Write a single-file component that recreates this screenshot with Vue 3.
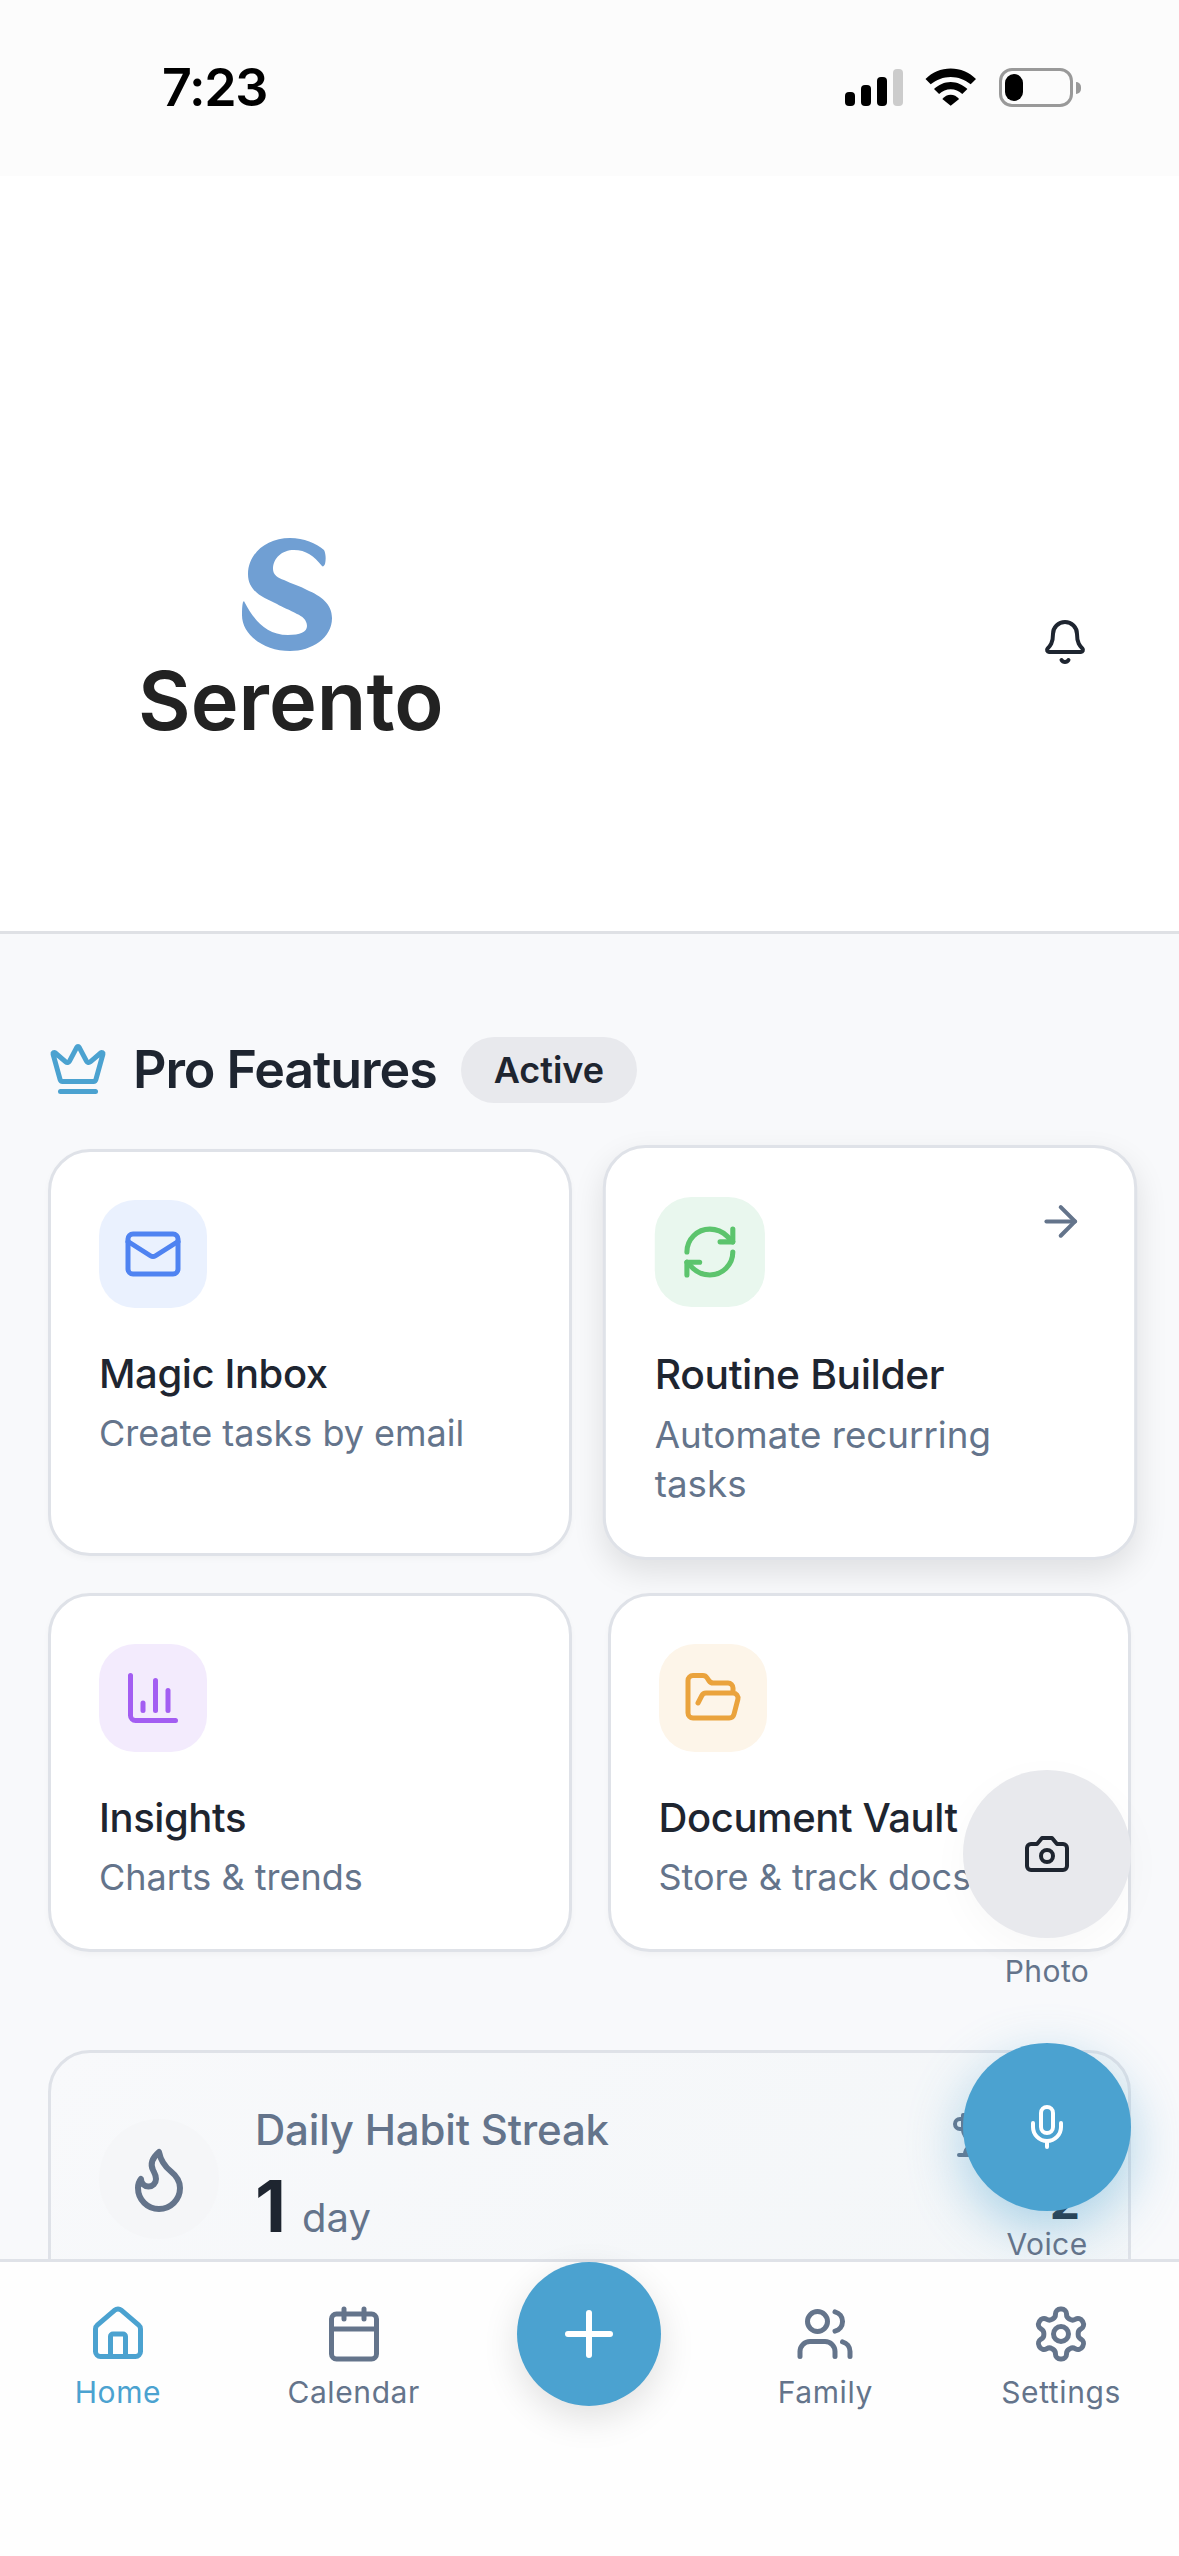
<template>
  <div class="phone">
    <div class="status-bar">
      <span class="time">7:23</span>
      <div class="status-icons">
        <div class="signal">
          <span v-for="b in signalBars" :key="b.h" class="bar" :class="{ off: b.off }" :style="{ height: b.h + 'px' }"></span>
        </div>
        <svg class="wifi" viewBox="0 0 52 38">
          <path d="M0.500 11C7 4.500 16 0.500 25.700 0.500S44.500 4.500 51 11l-5.300 5.200C40 11.800 33 9 25.700 9S11.500 11.800 5.700 16.200z" fill="#000" />
          <path d="M9 21C13.500 16.800 19.500 14 25.700 14s12.200 2.800 16.700 7l-5.100 5C34 23 30 21.300 25.700 21.300S17.500 23 14.100 26z" fill="#000" />
          <path d="M17.300 31c2.300-2.800 5.300-4.300 8.400-4.300s6.100 1.500 8.400 4.300L25.700 37.800z" fill="#000" />
        </svg>
        <div class="battery">
          <div class="battery-body"><span class="battery-fill"></span></div>
          <span class="battery-tip"></span>
        </div>
      </div>
    </div>

    <header class="app-header">
      <div class="logo">
        <svg class="logo-mark" viewBox="0 0 90 113">
          <path d="M82 12C84 16 84 22 83 26C82 28 81 29 80 28C72 18 64 12 52 12C40 12 31 20 31 31C31 37 36 40 42 42C50 46 58 48 65 52C79 58 90 66 90 80C90 100 70 113 48 113C22 113 0 97 0 77C0 72 0 68 1 64C2 63 2 63 3 65C10 78 22 97 46 97C58 97 65 94 65 88C65 82 60 78 55 76C48 72 40 69 35 66C22 60 6 54 6 36C6 16 24 0 48 0C62 0 74 5 82 12z" fill="#709fd3" />
        </svg>
        <span class="logo-name">Serento</span>
      </div>
      <svg class="lucide bell" viewBox="0 0 24 24">
        <path d="M10.268 21a2 2 0 0 0 3.464 0" />
        <path d="M3.262 15.326A1 1 0 0 0 4 17h16a1 1 0 0 0 .74-1.673C19.41 13.956 18 12.499 18 8A6 6 0 0 0 6 8c0 4.499-1.411 5.956-2.738 7.326" />
      </svg>
    </header>

    <main class="content">
      <div class="section-head">
        <svg class="lucide crown" viewBox="0 0 24 24">
          <path d="M11.562 3.266a.5.5 0 0 1 .876 0L15.39 8.87a1 1 0 0 0 1.516.294L21.183 5.5a.5.5 0 0 1 .798.519l-2.834 10.246a1 1 0 0 1-.956.734H5.81a1 1 0 0 1-.957-.734L2.02 6.02a.5.5 0 0 1 .798-.519l4.276 3.664a1 1 0 0 0 1.516-.294z" />
          <path d="M5 21h14" />
        </svg>
        <h2 class="section-title">Pro Features</h2>
        <span class="badge">Active</span>
      </div>

      <div class="feature-grid">
        <div class="feature-card" v-for="f in features" :key="f.title" :class="{ lifted: f.arrow }">
          <div class="feature-icon" :style="{ background: f.bg, color: f.color }">
            <svg class="lucide icon-60" viewBox="0 0 24 24">
              <path v-for="d in f.paths" :key="d" :d="d" />
              <rect v-if="f.rect" x="2" y="4" width="20" height="16" rx="2" />
            </svg>
          </div>
          <svg v-if="f.arrow" class="lucide arrow" viewBox="0 0 24 24">
            <path d="M5 12h14" />
            <path d="m12 5 7 7-7 7" />
          </svg>
          <h3 class="feature-title">{{ f.title }}</h3>
          <p class="feature-desc">{{ f.desc }}</p>
        </div>
      </div>

      <div class="streak-card">
        <div class="flame-wrap">
          <svg class="lucide flame" viewBox="0 0 24 24">
            <path d="M8.500 14.500A2.500 2.500 0 0 0 11 12c0-1.380-.5-2-1-3-1.072-2.143-.224-4.054 2-6 .5 2.500 2 4.900 4 6.500 2 1.600 3 3.500 3 5.500a7 7 0 1 1-14 0c0-1.153.433-2.294 1-3a2.500 2.500 0 0 0 2.500 2.500z" />
          </svg>
        </div>
        <div class="streak-text">
          <span class="streak-label">Daily Habit Streak</span>
          <div class="streak-value"><b>1</b><span>day</span></div>
        </div>
        <div class="streak-best">
          <svg class="lucide trophy" viewBox="0 0 24 24">
            <path d="M6 9H4.500a2.500 2.500 0 0 1 0-5H6" />
            <path d="M18 9h1.500a2.500 2.500 0 0 0 0-5H18" />
            <path d="M4 22h16" />
            <path d="M10 14.660V17c0 .55-.47.98-.97 1.210C7.850 18.750 7 20.240 7 22" />
            <path d="M14 14.660V17c0 .55.47.98.97 1.210C16.150 18.750 17 20.240 17 22" />
            <path d="M18 2H6v7a6 6 0 0 0 12 0V2Z" />
          </svg>
          <b>2</b>
        </div>
      </div>

      <div class="quick-actions">
        <div class="quick-item">
          <button class="quick-btn photo">
            <svg class="lucide icon-48" viewBox="0 0 24 24">
              <path d="M14.500 4h-5L7 7H4a2 2 0 0 0-2 2v9a2 2 0 0 0 2 2h16a2 2 0 0 0 2-2V9a2 2 0 0 0-2-2h-3l-2.500-3z" />
              <circle cx="12" cy="13" r="3" />
            </svg>
          </button>
          <span class="quick-label">Photo</span>
        </div>
        <div class="quick-item">
          <button class="quick-btn voice">
            <svg class="lucide icon-48" viewBox="0 0 24 24">
              <path d="M12 19v3" />
              <path d="M19 10v2a7 7 0 0 1-14 0v-2" />
              <rect x="9" y="2" width="6" height="13" rx="3" />
            </svg>
          </button>
          <span class="quick-label">Voice</span>
        </div>
      </div>
    </main>

    <nav class="tab-bar">
      <div class="tab" v-for="t in tabs" :key="t.label" :class="{ active: t.active, spacer: t.spacer }">
        <template v-if="t.spacer">
          <button class="add-btn">
            <svg class="lucide icon-72" viewBox="0 0 24 24">
              <path d="M5 12h14" />
              <path d="M12 5v14" />
            </svg>
          </button>
        </template>
        <template v-else>
          <svg class="lucide icon-60" viewBox="0 0 24 24">
            <path v-for="d in t.paths" :key="d" :d="d" />
            <rect v-if="t.calendar" x="3" y="4" width="18" height="18" rx="2" />
            <circle v-for="c in t.circles" :key="c[0]" :cx="c[0]" :cy="c[1]" :r="c[2]" />
          </svg>
          <span class="tab-label">{{ t.label }}</span>
        </template>
      </div>
    </nav>
  </div>
</template>

<script setup>
const signalBars = [{ h: 14 }, { h: 21 }, { h: 29 }, { h: 37, off: true }]

const features = [
  {
    title: 'Magic Inbox',
    desc: 'Create tasks by email',
    bg: '#eaf1fe',
    color: '#4f83f1',
    rect: true,
    paths: ['m22 7-8.97 5.7a1.94 1.94 0 0 1-2.06 0L2 7'],
  },
  {
    title: 'Routine Builder',
    desc: 'Automate recurring tasks',
    bg: '#e9f7ee',
    color: '#5cc46d',
    arrow: true,
    paths: [
      'M3 12a9 9 0 0 1 9-9 9.75 9.75 0 0 1 6.74 2.74L21 8',
      'M21 3v5h-5',
      'M21 12a9 9 0 0 1-9 9 9.75 9.75 0 0 1-6.74-2.74L3 16',
      'M8 16H3v5',
    ],
  },
  {
    title: 'Insights',
    desc: 'Charts & trends',
    bg: '#f3ebfd',
    color: '#a35df2',
    paths: ['M3 3v16a2 2 0 0 0 2 2h16', 'M18 17V9', 'M13 17V5', 'M8 17v-3'],
  },
  {
    title: 'Document Vault',
    desc: 'Store & track docs',
    bg: '#fdf5e9',
    color: '#eaa33d',
    paths: [
      'm6 14 1.5-2.9A2 2 0 0 1 9.24 10H20a2 2 0 0 1 1.94 2.5l-1.54 6a2 2 0 0 1-1.94 1.5H4a2 2 0 0 1-2-2V5a2 2 0 0 1 2-2h3.9a2 2 0 0 1 1.69.9l.81 1.2a2 2 0 0 0 1.67.9H18a2 2 0 0 1 2 2v2',
    ],
  },
]

const tabs = [
  {
    label: 'Home',
    active: true,
    paths: [
      'M15 21v-8a1 1 0 0 0-1-1h-4a1 1 0 0 0-1 1v8',
      'M3 10a2 2 0 0 1 .709-1.528l7-5.999a2 2 0 0 1 2.582 0l7 5.999A2 2 0 0 1 21 10v9a2 2 0 0 1-2 2H5a2 2 0 0 1-2-2z',
    ],
  },
  { label: 'Calendar', calendar: true, paths: ['M8 2v4', 'M16 2v4', 'M3 10h18'] },
  { label: 'add', spacer: true },
  {
    label: 'Family',
    paths: [
      'M16 21v-2a4 4 0 0 0-4-4H6a4 4 0 0 0-4 4v2',
      'M22 21v-2a4 4 0 0 0-3-3.87',
      'M16 3.13a4 4 0 0 1 0 7.75',
    ],
    circles: [[9, 7, 4]],
  },
  {
    label: 'Settings',
    paths: [
      'M12.22 2h-.44a2 2 0 0 0-2 2v.18a2 2 0 0 1-1 1.73l-.43.25a2 2 0 0 1-2 0l-.15-.08a2 2 0 0 0-2.73.73l-.22.38a2 2 0 0 0 .73 2.73l.15.1a2 2 0 0 1 1 1.72v.51a2 2 0 0 1-1 1.74l-.15.09a2 2 0 0 0-.73 2.73l.22.38a2 2 0 0 0 2.73.73l.15-.08a2 2 0 0 1 2 0l.43.25a2 2 0 0 1 1 1.73V20a2 2 0 0 0 2 2h.44a2 2 0 0 0 2-2v-.18a2 2 0 0 1 1-1.73l.43-.25a2 2 0 0 1 2 0l.15.08a2 2 0 0 0 2.73-.73l.22-.39a2 2 0 0 0-.73-2.73l-.15-.08a2 2 0 0 1-1-1.74v-.5a2 2 0 0 1 1-1.74l.15-.09a2 2 0 0 0 .73-2.73l-.22-.38a2 2 0 0 0-2.73-.73l-.15.08a2 2 0 0 1-2 0l-.43-.25a2 2 0 0 1-1-1.73V4a2 2 0 0 0-2-2z',
    ],
    circles: [[12, 12, 3]],
  },
]
</script>

<style scoped>
.phone {
  width: 1179px;
  height: 2556px;
  display: flex;
  flex-direction: column;
  overflow: hidden;
  background: #f8f9fb;
  font-family: Inter, "Liberation Sans", sans-serif;
  color: #1e2530;
}

.lucide {
  fill: none;
  stroke: currentColor;
  stroke-width: 2;
  stroke-linecap: round;
  stroke-linejoin: round;
  flex-shrink: 0;
}
.icon-48 { width: 48px; height: 48px; }
.icon-60 { width: 60px; height: 60px; }
.icon-72 { width: 72px; height: 72px; }

/* status bar */
.status-bar {
  height: 176px;
  flex-shrink: 0;
  background: #fcfcfc;
  display: flex;
  justify-content: space-between;
  padding: 68px 98px 0 162px;
  box-sizing: border-box;
}
.time {
  font-size: 52px;
  font-weight: 600;
  line-height: 39px;
  letter-spacing: -1.3px;
  color: #000;
}
.status-icons {
  display: flex;
  align-items: flex-start;
  gap: 22px;
  margin-left: auto;
}
.signal {
  display: flex;
  align-items: flex-end;
  gap: 6px;
  height: 38px;
}
.bar {
  width: 10px;
  border-radius: 4px;
  background: #000;
}
.bar.off { background: #cccccc; }
.wifi { width: 52px; height: 38px; }
.battery {
  display: flex;
  align-items: center;
  margin-left: 0;
}
.battery-body {
  width: 74px;
  height: 39px;
  border: 3px solid #999;
  border-radius: 13px;
  box-sizing: border-box;
  padding: 3px;
}
.battery-fill {
  display: block;
  width: 18px;
  height: 100%;
  border-radius: 9px;
  background: #000;
}
.battery-tip {
  width: 5px;
  height: 12px;
  margin-left: 3px;
  border-radius: 0 6px 6px 0;
  background: #999;
}

/* header */
.app-header {
  height: 758px;
  flex-shrink: 0;
  box-sizing: border-box;
  background: #fff;
  border-bottom: 3px solid #dfe1e5;
  display: flex;
  align-items: center;
  justify-content: space-between;
  padding: 177px 90px 0 138px;
}
.logo {
  display: flex;
  flex-direction: column;
  align-items: center;
  margin-top: 3px;
}
.logo-mark {
  width: 90px;
  height: 113px;
  margin-right: 8px;
}
.logo-name {
  margin-top: 2px;
  font-size: 81px;
  font-weight: 600;
  line-height: 96px;
  color: #222;
}
.bell { width: 48px; height: 48px; color: #1e2530; }

/* content */
.content {
  position: relative;
  flex: 1;
  min-height: 0;
  overflow: hidden;
  padding: 103px 48px 0;
}
.section-head {
  display: flex;
  align-items: center;
  height: 66px;
}
.crown { width: 60px; height: 60px; margin-top: -2px; color: #4ba2d0; }
.section-title {
  margin: 0 0 0 25px;
  font-size: 52px;
  font-weight: 600;
  line-height: 66px;
  letter-spacing: -1.1px;
}
.badge {
  margin-left: 24px;
  padding: 0 33px;
  height: 66px;
  line-height: 66px;
  border-radius: 33px;
  background: #e8e9ed;
  font-size: 36px;
  font-weight: 600;
}

.feature-grid {
  margin-top: 46px;
  display: grid;
  grid-template-columns: 1fr 1fr;
  gap: 37px 36px;
}
.feature-card {
  position: relative;
  box-sizing: border-box;
  padding: 48px;
  background: #fff;
  border: 3px solid #dfe2e8;
  border-radius: 42px;
  box-shadow: 0 3px 6px rgba(0, 0, 0, 0.03);
}
.feature-card.lifted {
  transform: scale(1.02);
  box-shadow: 0 12px 30px rgba(0, 0, 0, 0.1);
}
.feature-icon {
  width: 108px;
  height: 108px;
  border-radius: 36px;
  display: flex;
  align-items: center;
  justify-content: center;
  margin-bottom: 36px;
}
.arrow {
  position: absolute;
  top: 48px;
  right: 48px;
  width: 48px;
  height: 48px;
  color: #64748b;
}
.feature-title {
  margin: 0;
  font-size: 40px;
  font-weight: 500;
  line-height: 60px;
  letter-spacing: -0.4px;
}
.feature-desc {
  margin: 5px 0 0;
  font-size: 36px;
  line-height: 48px;
  color: #64748b;
}

.streak-card {
  margin-top: 98px;
  height: 300px;
  box-sizing: border-box;
  display: flex;
  align-items: flex-start;
  padding: 66px 48px 0;
  border: 3px solid #dfe2e8;
  border-radius: 42px;
  background: linear-gradient(135deg, #f8f9fb, #f3f6f8);
}
.flame-wrap {
  width: 120px;
  height: 120px;
  border-radius: 50%;
  background: #f5f6f8;
  display: flex;
  align-items: center;
  justify-content: center;
}
.flame { width: 72px; height: 72px; color: #64748b; }
.streak-text {
  margin-left: 36px;
  flex: 1;
  margin-top: -19px;
}
.streak-label {
  display: block;
  font-size: 42px;
  font-weight: 500;
  line-height: 60px;
  letter-spacing: -0.2px;
  color: #64748b;
}
.streak-value {
  display: flex;
  align-items: baseline;
  gap: 16px;
  margin-top: 4px;
  line-height: 84px;
}
.streak-value b {
  font-size: 72px;
  font-weight: 700;
}
.streak-value span {
  font-size: 40px;
  color: #64748b;
}
.streak-best {
  display: flex;
  flex-direction: column;
  align-items: flex-end;
  margin-top: -8px;
}
.trophy {
  width: 48px;
  height: 48px;
  margin-right: 81px;
  color: #64748b;
}
.streak-best b {
  margin-top: 13px;
  font-size: 48px;
  font-weight: 700;
  line-height: 60px;
}

/* photo + voice buttons */
.quick-actions {
  position: absolute;
  top: 836px;
  right: 48px;
  display: flex;
  flex-direction: column;
  gap: 57px;
}
.quick-item {
  display: flex;
  flex-direction: column;
  align-items: center;
  gap: 18px;
}
.quick-btn {
  width: 168px;
  height: 168px;
  padding: 0;
  border: none;
  border-radius: 50%;
  display: flex;
  align-items: center;
  justify-content: center;
}
.quick-btn.photo {
  background: #e8e9ed;
  color: #1e2530;
  box-shadow: 0 12px 40px rgba(0, 0, 0, 0.03);
}
.quick-btn.voice {
  background: #4ba2d0;
  color: #fff;
  box-shadow: 0 18px 54px rgba(75, 162, 208, 0.45);
}
.quick-label {
  font-size: 30px;
  line-height: 30px;
  letter-spacing: 0.4px;
  color: #64748b;
}

/* bottom tabs */
.tab-bar {
  position: relative;
  height: 297px;
  flex-shrink: 0;
  box-sizing: border-box;
  background: #fefefe;
  border-top: 3px solid #dfe2e8;
  display: grid;
  grid-template-columns: repeat(5, 1fr);
}
.tab {
  display: flex;
  flex-direction: column;
  align-items: center;
  padding-top: 42px;
  color: #64748b;
}
.tab.active { color: #4ba2d0; }
.tab.spacer { padding-top: 0; }
.tab-label {
  margin-top: 7px;
  font-size: 30px;
  font-weight: 400;
  line-height: 42px;
  letter-spacing: 0.6px;
}
.add-btn {
  width: 144px;
  height: 144px;
  padding: 0;
  border: none;
  border-radius: 50%;
  background: #4ba2d0;
  color: #fff;
  display: flex;
  align-items: center;
  justify-content: center;
  box-shadow: 0 12px 36px rgba(0, 0, 0, 0.12);
}
</style>

<style>
html, body { background: #fff; }
</style>
